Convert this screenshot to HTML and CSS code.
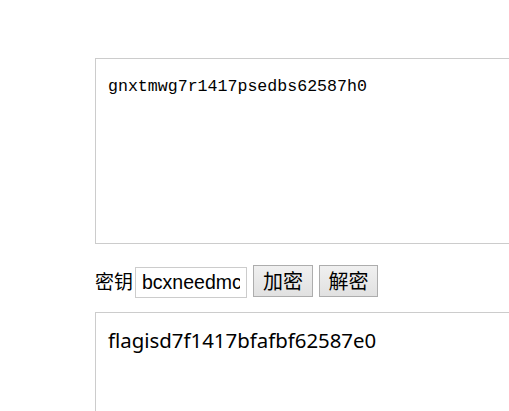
FILE: index.html
```html
<!DOCTYPE html>
<html>
<head>
<meta charset="utf-8">
<link rel="stylesheet" href="styles.css">
</head>
<body>
<div class="page">
  <textarea class="box box-top" readonly>gnxtmwg7r1417psedbs62587h0</textarea>
  <div class="row">
    <span class="label">密钥</span>
    <input class="key" type="text" value="bcxneedmcxyz">
    <button class="btn">加密</button>
    <button class="btn">解密</button>
  </div>
  <textarea class="box box-bottom" readonly>flagisd7f1417bfafbf62587e0</textarea>
</div>
</body>
</html>
```
FILE: styles.css
```css
html, body {
  margin: 0;
  padding: 0;
  background: #fff;
  overflow: hidden;
}
.page {
  padding: 58px 0 0 95px;
  width: 600px;
  font-family: "Noto Sans CJK SC", "Noto Sans", sans-serif;
  font-size: 20px;
  color: #000;
}
.box {
  display: block;
  box-sizing: border-box;
  width: 560px;
  margin: 0;
  border: 1px solid #cccccc;
  padding: 12px 12px;
  resize: none;
  overflow: hidden;
  outline: none;
  background: #fff;
  color: #000;
}
.box-top {
  height: 186px;
  font-family: "Liberation Mono", monospace;
  font-size: 16.6px;
  line-height: 20px;
  padding-top: 18px;
}
.box-bottom {
  height: 120px;
  margin-top: 14px;
  font-family: "Noto Sans", "Liberation Sans", sans-serif;
  font-size: 20.4px;
  line-height: 26px;
  padding-top: 14px;
}
.row {
  display: flex;
  align-items: flex-start;
  margin-top: 21px;
  height: 33px;
}
.label {
  margin-top: 4px;
  line-height: 24px;
  font-size: 19px;
  font-family: "Noto Sans CJK SC", sans-serif;
}
.key {
  box-sizing: border-box;
  width: 112px;
  height: 31px;
  margin: 2px 0 0 2px;
  border: 1px solid #cccccc;
  padding: 0 6px;
  font-family: "Liberation Sans", Arial, sans-serif;
  font-size: 19.5px;
  color: #000;
  outline: none;
}
.btn {
  box-sizing: border-box;
  height: 32px;
  width: 60px;
  margin-left: 6px;
  padding: 0;
  border: 1px solid #adadad;
  border-radius: 0;
  background: linear-gradient(#f0f0f0, #e1e1e1);
  font-family: "Noto Sans CJK SC", sans-serif;
  font-size: 20px;
  line-height: 28px;
  color: #000;
}
.btn + .btn {
  width: 59px;
}
```
